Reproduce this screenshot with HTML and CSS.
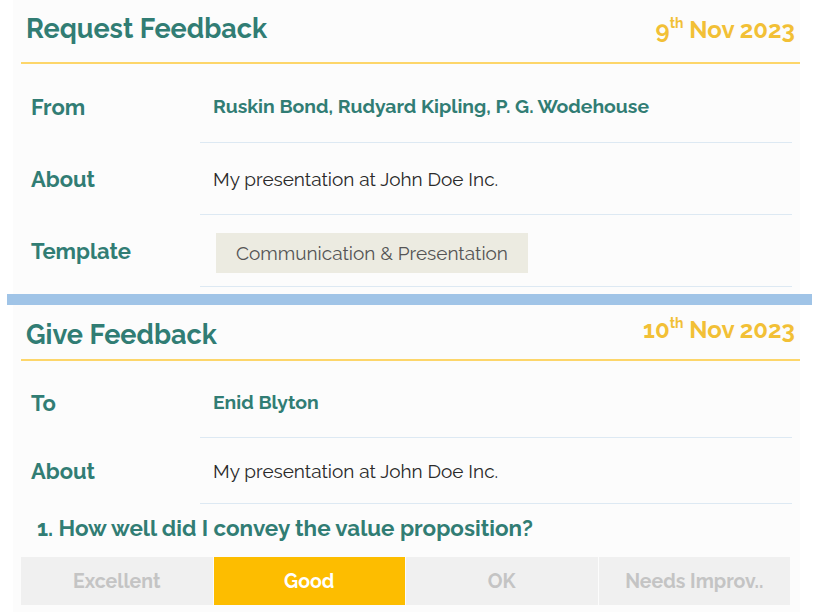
FILE: index.html
```html
<!DOCTYPE html>
<html lang="en">
<head>
    <meta charset="UTF-8">
    <meta name="viewport" content="width=device-width, initial-scale=1.0">
    <title>Feedback</title>
    <link rel="stylesheet" href="styles.css">
</head>
<body>
    <section class="panel">
        <header class="panel-head">
            <h1>Request Feedback</h1>
            <span class="date">9<sup>th</sup> Nov 2023</span>
        </header>
        <div class="row first">
            <div class="label">From</div>
            <div class="value names">Ruskin Bond, Rudyard Kipling, P. G. Wodehouse</div>
        </div>
        <div class="row">
            <div class="label">About</div>
            <div class="value">My presentation at John Doe Inc.</div>
        </div>
        <div class="row">
            <div class="label">Template</div>
            <div class="value"><span class="chip">Communication &amp; Presentation</span></div>
        </div>
    </section>

    <div class="divider"></div>

    <section class="panel give">
        <header class="panel-head">
            <h1>Give Feedback</h1>
            <span class="date">10<sup>th</sup> Nov 2023</span>
        </header>
        <div class="row first">
            <div class="label">To</div>
            <div class="value names">Enid Blyton</div>
        </div>
        <div class="row">
            <div class="label">About</div>
            <div class="value">My presentation at John Doe Inc.</div>
        </div>
        <h2 class="question">1. How well did I convey the value proposition?</h2>
        <div class="choices">
            <button>Excellent</button>
            <button class="selected">Good</button>
            <button>OK</button>
            <button>Needs Improv..</button>
        </div>
    </section>
</body>
</html>
```

FILE: styles.css
```css
body {
    margin: 0;
    padding: 0 7px;
    background: #ffffff;
    font-family: "Raleway", "Lato", "Open Sans", sans-serif;
    color: #333;
}
.panel {
    margin: 0 12px 0 6px;
    background: #fcfcfc;
    padding: 0 8px 7px 8px;
}
.panel-head {
    display: flex;
    justify-content: space-between;
    align-items: baseline;
    height: 62px;
    margin-right: -8px;
    padding: 0 5px;
    border-bottom: 2px solid #fdd66a;
    box-sizing: content-box;
}
.panel-head h1 {
    margin: 0;
    padding-top: 13px;
    font-size: 27px;
    font-weight: 700;
    color: #317d74;
}
.date {
    font-size: 24px;
    font-weight: 700;
    color: #f2c036;
}
.date sup {
    font-size: 14px;
    vertical-align: 10px;
    line-height: 0;
}
.row {
    display: grid;
    grid-template-columns: 179px 1fr;
    height: 72px;
}
.row.first {
    margin-top: 7px;
}
.label {
    display: flex;
    align-items: center;
    padding-left: 10px;
    font-size: 22px;
    font-weight: 700;
    color: #317d74;
}
.value {
    display: flex;
    align-items: center;
    padding-left: 13px;
    border-bottom: 1px solid #dde9f3;
    font-size: 19px;
    color: #2a2a2a;
}
.value.names {
    font-size: 19.4px;
    font-weight: 700;
    color: #317d74;
}
.chip {
    margin: 4px 0 0 3px;
    padding: 9px 20px;
    background: #ecebe1;
    color: #555;
    font-size: 19px;
}
.divider {
    height: 11px;
    background: #a0c4e7;
}
.give .panel-head {
    height: 54px;
    align-items: center;
}
.give .panel-head h1 {
    font-size: 27px;
    padding-top: 4px;
}
.give .date {
    margin-top: -6px;
}
.give .row {
    height: 66px;
}
.give .row.first {
    height: 70px;
}
.question {
    margin: 11px 0 16px 16px;
    font-size: 22.4px;
    font-weight: 700;
    color: #317d74;
}
.choices {
    display: grid;
    grid-template-columns: repeat(4, 1fr);
    gap: 1px;
    margin-right: 2px;
}
.choices button {
    height: 48px;
    border: none;
    background: #f0f0f0;
    color: #c4c4c4;
    font-family: inherit;
    font-size: 19.5px;
    font-weight: 700;
}
.choices button.selected {
    background: #fdbd00;
    color: #ffffff;
}
```
